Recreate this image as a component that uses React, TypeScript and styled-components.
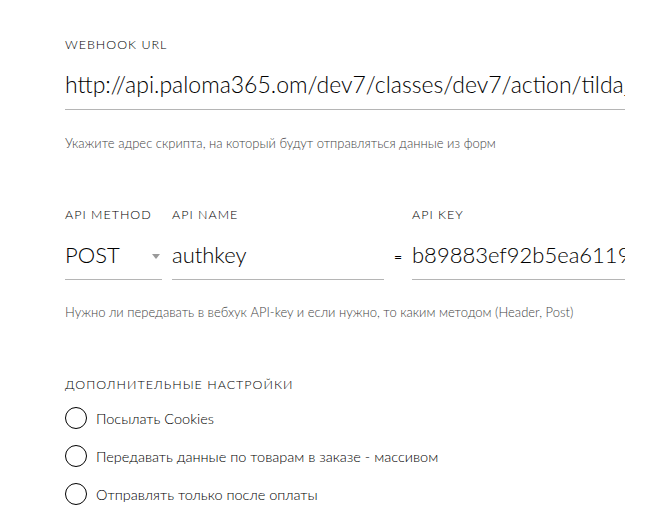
import React from "react";
import styled, { createGlobalStyle } from "styled-components";

const Global = createGlobalStyle`
  html, body { margin: 0; padding: 0; background: #fff; }
  body { font-family: "Lato", "Noto Sans", sans-serif; color: #000; }
`;

const Page = styled.div`
  padding: 38px 44px 0 65px;
  width: 560px;
  display: flex;
  flex-direction: column;
`;

const Label = styled.div`
  font-size: 12.5px;
  letter-spacing: 1px;
  text-transform: uppercase;
  color: #000;
  font-weight: 300;
  line-height: 14px;
  white-space: nowrap;
`;

const Field = styled.div<{ $h: number }>`
  display: flex;
  align-items: flex-end;
  padding-bottom: 13px;
  border-bottom: 1px solid #b5b5b5;
  height: ${(p) => p.$h}px;
  width: 100%;
  overflow: hidden;
  box-sizing: border-box;
  position: relative;
`;

const Value = styled.div<{ $size?: number }>`
  font-size: ${(p) => p.$size || 22}px;
  font-weight: 300;
  color: #000;
  white-space: nowrap;
  line-height: 1;
`;

const Hint = styled.div<{ $mt: number }>`
  margin-top: ${(p) => p.$mt}px;
  font-size: 13px;
  color: #444;
  font-weight: 300;
  line-height: 14px;
`;

const Row = styled.div`
  display: flex;
  align-items: flex-end;
  margin-top: 58px;
`;

const Col = styled.div<{ $w: number; $ml?: number }>`
  width: ${(p) => p.$w}px;
  margin-left: ${(p) => p.$ml || 0}px;
  display: flex;
  flex-direction: column;
  gap: 7px;
`;

const Arrow = styled.span`
  position: absolute;
  right: 2px;
  top: 25px;
  width: 0;
  height: 0;
  border-left: 4.5px solid transparent;
  border-right: 4.5px solid transparent;
  border-top: 5px solid #9a9a9a;
`;

const Eq = styled.div`
  width: 28px;
  display: flex;
  justify-content: center;
  align-items: flex-end;
  height: 50px;
  padding-bottom: 15px;
  font-size: 14px;
  color: #000;
  box-sizing: border-box;
`;

const Section = styled.div`
  margin-top: 59px;
  display: flex;
  flex-direction: column;
`;

const Options = styled.div`
  margin-top: 15px;
  display: flex;
  flex-direction: column;
  gap: 16px;
`;

const Option = styled.label`
  display: flex;
  align-items: center;
  gap: 9px;
  font-size: 14.5px;
  font-weight: 300;
  color: #000;
  cursor: pointer;
`;

const Circle = styled.span`
  width: 20px;
  height: 20px;
  border: 1.5px solid #000;
  border-radius: 50%;
  flex: none;
`;

export default function App() {
  return (
    <>
      <Global />
      <Page>
        <Label>Webhook URL</Label>
        <Field $h={58}>
          <Value $size={23}>http://api.paloma365.om/dev7/classes/dev7/action/tilda_webhook</Value>
        </Field>
        <Hint $mt={26}>Укажите адрес скрипта, на который будут отправляться данные из форм</Hint>
        <Row>
          <Col $w={97}>
            <Label>API Method</Label>
            <Field $h={51}>
              <Value>POST</Value>
              <Arrow />
            </Field>
          </Col>
          <Col $w={212} $ml={10}>
            <Label>API Name</Label>
            <Field $h={51}>
              <Value>authkey</Value>
            </Field>
          </Col>
          <Eq>=</Eq>
          <Col $w={213}>
            <Label>API Key</Label>
            <Field $h={51}>
              <Value>b89883ef92b5ea6119c4</Value>
            </Field>
          </Col>
        </Row>
        <Hint $mt={25}>Нужно ли передавать в вебхук API-key и если нужно, то каким методом (Header, Post)</Hint>
        <Section>
          <Label>Дополнительные настройки</Label>
          <Options>
            <Option><Circle />Посылать Cookies</Option>
            <Option><Circle />Передавать данные по товарам в заказе - массивом</Option>
            <Option><Circle />Отправлять только после оплаты</Option>
          </Options>
        </Section>
      </Page>
    </>
  );
}
